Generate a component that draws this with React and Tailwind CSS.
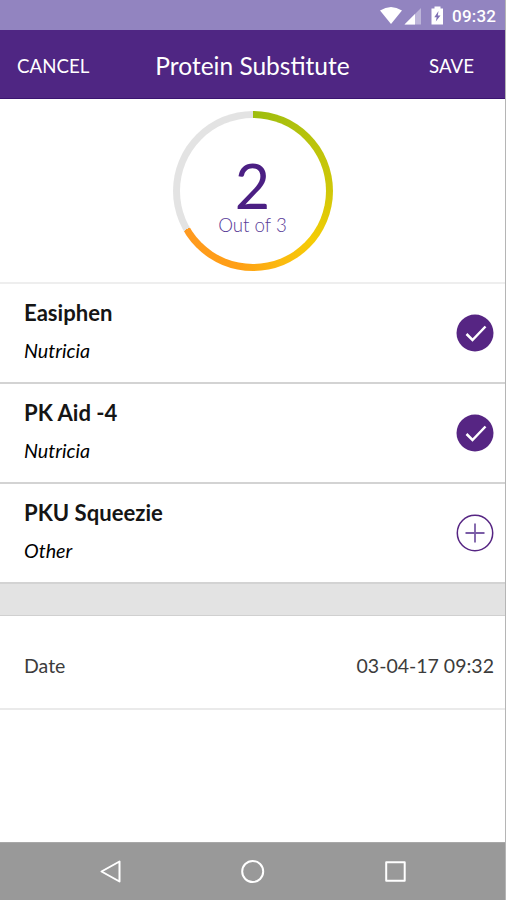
import React from 'react';

const products = [
    { name: 'Easiphen', maker: 'Nutricia', taken: true },
    { name: 'PK Aid -4', maker: 'Nutricia', taken: true },
    { name: 'PKU Squeezie', maker: 'Other', taken: false },
];

const StatusBar = () => (
    <div className="h-[30px] bg-[#9284c0] flex items-center">
        <svg className="w-full h-[30px]" viewBox="0 0 505 30">
            {/* Wifi */}
            <path d="M380 10.5 Q391 3.5 402 10.5 L391 24 Z" fill="#fff" />
            {/* Signal */}
            <path d="M421 8 V24.5 H404.5 Z" fill="#fff" opacity="0.4" />
            <path d="M415 14 V24.5 H404.5 Z" fill="#fff" />
            {/* Battery */}
            <path d="M434.5 6.5 H440.5 V8.5 H443 V24.5 H431.5 V8.5 H434.5 Z" fill="#fff" />
            <path d="M438.5 11 L434.3 17.3 H436.7 L435.8 21.5 L440.5 15.5 H437.8 Z" fill="#7f70b4" />
            <text x="452" y="22" fill="#fff" className="font-['Roboto',sans-serif] text-[17px] font-medium" textLength="44">09:32</text>
        </svg>
    </div>
);

const Header = () => (
    <header className="h-[69px] bg-[#4f2683] border-b border-[#3a1470] pl-[17px] pr-[31px] pt-[5px] grid grid-cols-[1fr_auto_1fr] items-center text-white">
        <button className="text-left text-[18.7px]">CANCEL</button>
        <h1 className="text-[24.5px] relative left-[7px]">Protein Substitute</h1>
        <button className="text-right text-[18.7px]">SAVE</button>
    </header>
);

const Progress = () => (
    <div className="h-[185px] pt-3 border-b-2 border-[#eeeeee]">
        <div className="size-40 mx-auto rounded-full p-[7px] bg-[conic-gradient(#9dbd0e_0deg,#b4c20c_40deg,#d0c808_90deg,#f5cc05_130deg,#fbb910_160deg,#ff9f14_190deg,#ff9a20_240deg,#e3e3e3_240deg)]">
            <div className="size-full rounded-full bg-white flex flex-col items-center pt-[41px]">
                <span className="text-[61px] leading-[53px] text-[#4b1f83]">2</span>
                <span className="text-[18.7px] leading-6 mt-px font-light text-[#5a3c98]">Out of 3</span>
            </div>
        </div>
    </div>
);

const ProductRow = ({ name, maker, taken }) => (
    <li className="h-[100px] pl-6 pr-[11px] flex items-center justify-between border-b-2 border-[#d3d3d3]">
        <div className="text-black pb-1">
            <p className="text-[22.1px] leading-7 font-bold text-[#151515]">{name}</p>
            <p className="text-[19.7px] leading-6 mt-3 italic">{maker}</p>
        </div>
        <svg width="38" height="38" viewBox="0 0 38 38" fill="none">
            {taken ? (
                <>
                    <circle cx="19" cy="19" r="18.5" fill="#562583" />
                    <path d="M10.5 20 L16.5 26 L29.5 12.5" stroke="#fff" strokeWidth="2.5" />
                </>
            ) : (
                <>
                    <circle cx="19" cy="19" r="17.7" stroke="#562583" strokeWidth="1.5" />
                    <path d="M19 9.5 V28.5 M9.5 19 H28.5" stroke="#7a5ca6" strokeWidth="1.8" />
                </>
            )}
        </svg>
    </li>
);

const NavBar = () => (
    <nav className="h-[58px] mt-auto bg-[#999999] border-t border-[#a8a8a8]">
        <svg className="w-full h-[57px]" viewBox="0 0 505 57" fill="none" stroke="#fff" strokeWidth="2" strokeLinejoin="round">
            <path d="M119.5 18.5 V38.5 L101.5 28.5 Z" />
            <circle cx="252.7" cy="28.5" r="10.5" />
            <rect x="386.2" y="19.2" width="18.5" height="18.5" />
        </svg>
    </nav>
);

export default function App() {
    return (
        <div className="w-[506px] h-[900px] flex flex-col bg-white border-r border-[#b5b5b5] font-['Lato',sans-serif] overflow-hidden">
            <StatusBar />
            <Header />
            <Progress />
            <ul>
                {products.map((p) => (
                    <ProductRow key={p.name} {...p} />
                ))}
            </ul>
            {/* Section gap */}
            <div className="h-8 bg-[#e3e3e3] border-b border-[#d0d0d0]" />
            <div className="h-[94px] pl-6 pr-[11px] pt-[7px] flex items-center justify-between border-b-2 border-[#eaeaea] text-[19.5px] text-[#3c3c3c]">
                <span>Date</span>
                <span>03-04-17 09:32</span>
            </div>
            <NavBar />
        </div>
    );
}
